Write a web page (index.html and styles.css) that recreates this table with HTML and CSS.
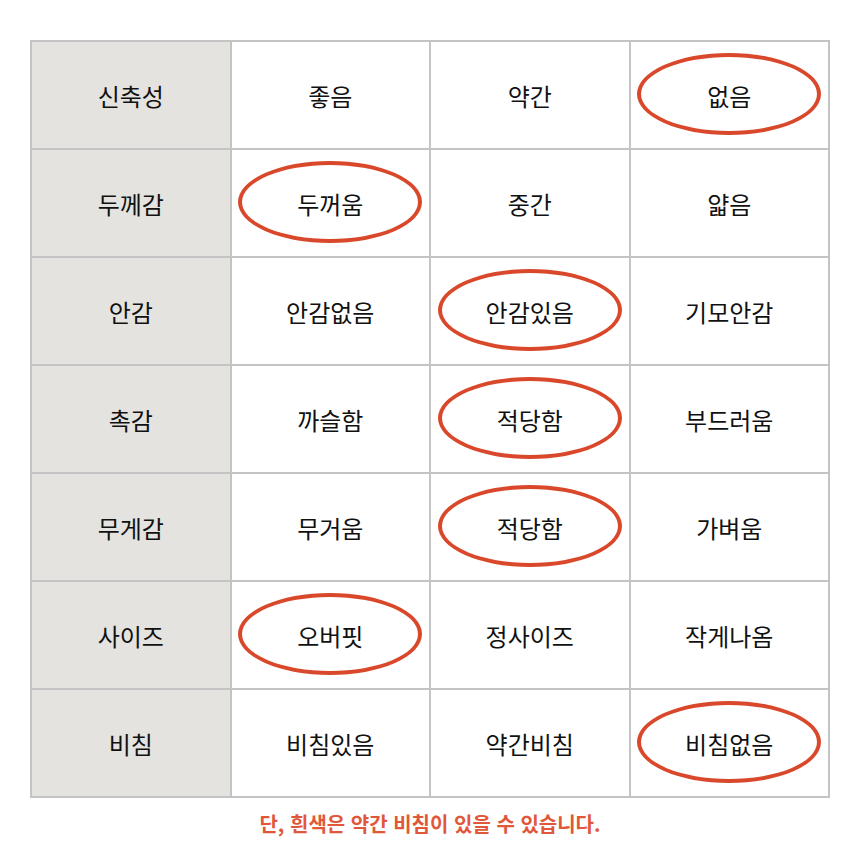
FILE: index.html
```html
<!DOCTYPE html>
<html lang="ko">
<head>
<meta charset="utf-8">
<link rel="stylesheet" href="styles.css">
</head>
<body>
<div class="wrap">
  <div class="grid">
    <div class="cell head">신축성</div>
    <div class="cell">좋음</div>
    <div class="cell">약간</div>
    <div class="cell mark">없음<span class="ring"></span></div>

    <div class="cell head">두께감</div>
    <div class="cell mark">두꺼움<span class="ring"></span></div>
    <div class="cell">중간</div>
    <div class="cell">얇음</div>

    <div class="cell head">안감</div>
    <div class="cell">안감없음</div>
    <div class="cell mark">안감있음<span class="ring"></span></div>
    <div class="cell">기모안감</div>

    <div class="cell head">촉감</div>
    <div class="cell">까슬함</div>
    <div class="cell mark">적당함<span class="ring"></span></div>
    <div class="cell">부드러움</div>

    <div class="cell head">무게감</div>
    <div class="cell">무거움</div>
    <div class="cell mark">적당함<span class="ring"></span></div>
    <div class="cell">가벼움</div>

    <div class="cell head">사이즈</div>
    <div class="cell mark">오버핏<span class="ring"></span></div>
    <div class="cell">정사이즈</div>
    <div class="cell">작게나옴</div>

    <div class="cell head">비침</div>
    <div class="cell">비침있음</div>
    <div class="cell">약간비침</div>
    <div class="cell mark">비침없음<span class="ring"></span></div>
  </div>
  <p class="note">단, 흰색은 약간 비침이 있을 수 있습니다.</p>
</div>
</body>
</html>
```

FILE: styles.css
```css
html, body {
  margin: 0;
  padding: 0;
  background: #ffffff;
}

.wrap {
  padding: 40px 30px 0;
  font-family: "Noto Sans CJK KR", "Noto Sans", sans-serif;
}

.grid {
  display: grid;
  grid-template-columns: repeat(4, 1fr);
  grid-auto-rows: 106px;
  gap: 2px;
  width: 800px;
  box-sizing: border-box;
  border: 2px solid #c4c4c4;
  background: #c4c4c4;
}

.cell {
  position: relative;
  display: flex;
  align-items: center;
  justify-content: center;
  background: #ffffff;
  font-size: 24px;
  font-weight: 400;
  color: #111111;
}

.cell.head {
  background: #e4e3df;
}

.ring {
  position: absolute;
  left: 50%;
  top: 50%;
  width: 184px;
  height: 82px;
  margin-left: -92px;
  margin-top: -42px;
  box-sizing: border-box;
  border: 4px solid #d9482b;
  border-radius: 50%;
}

.note {
  margin: 12px 0 0;
  width: 800px;
  text-align: center;
  font-size: 20px;
  line-height: 28px;
  font-weight: 700;
  color: #e0573a;
}
```
